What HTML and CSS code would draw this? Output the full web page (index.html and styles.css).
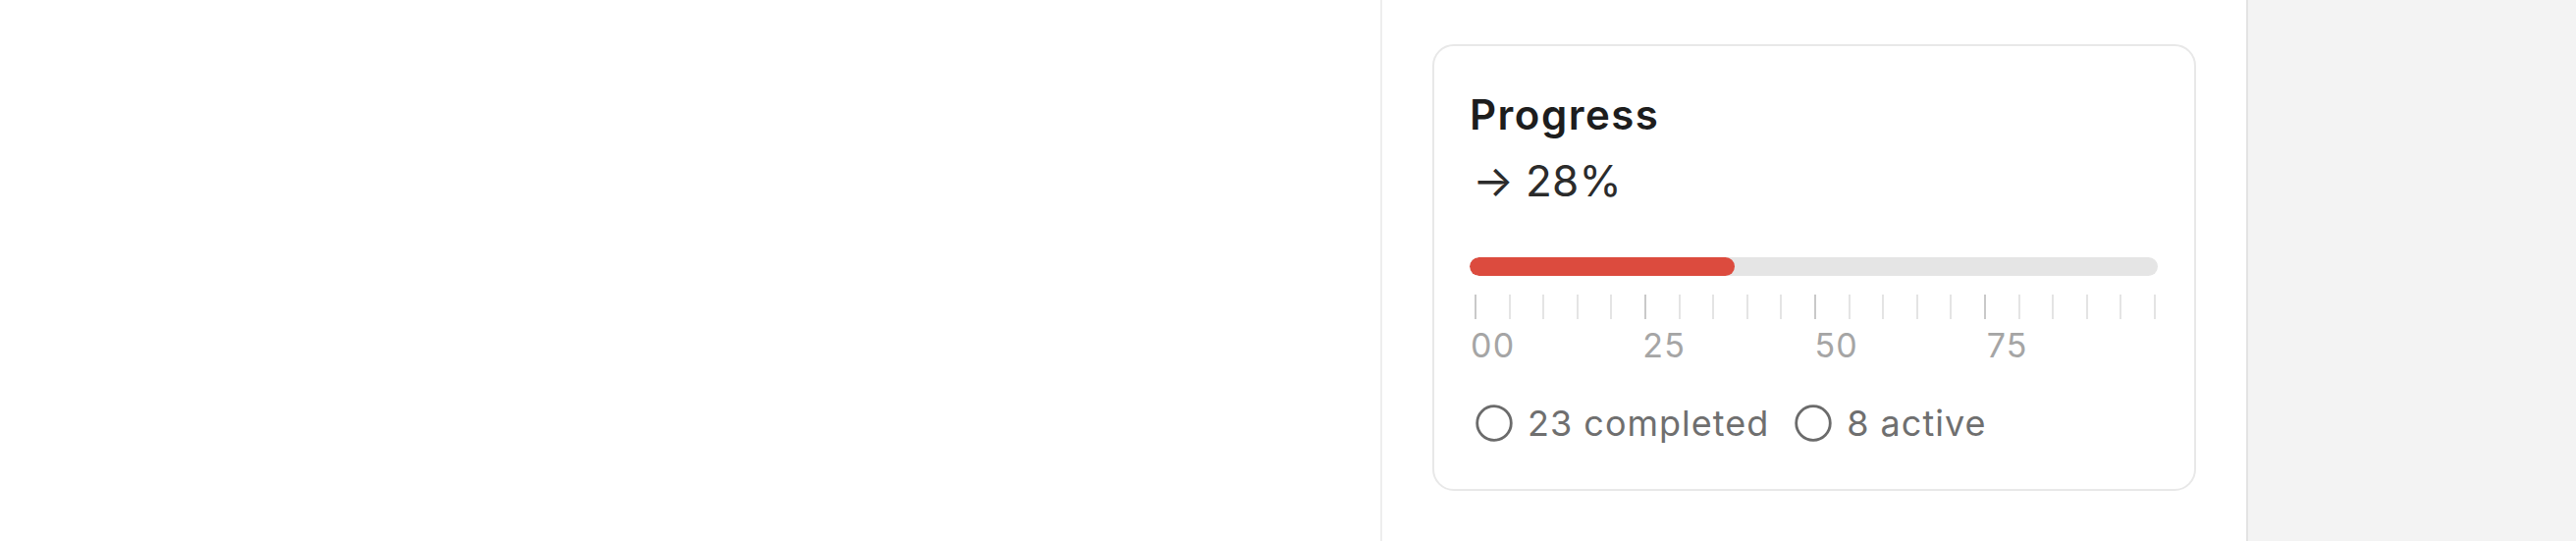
FILE: index.html
```html
<!DOCTYPE html>
<html lang="en">
<head>
<meta charset="utf-8">
<title>Progress</title>
<link rel="stylesheet" href="styles.css">
</head>
<body>
<div class="layout">
  <main class="main"></main>
  <aside class="panel">
    <section class="card">
      <h2 class="card-title">Progress</h2>
      <div class="card-value"><span class="arrow">→</span> 28%</div>
      <div class="bar"><div class="bar-fill" style="width: 38.5%"></div></div>
      <div class="ticks">
        <span class="tick major"></span><span class="tick"></span><span class="tick"></span><span class="tick"></span><span class="tick"></span>
        <span class="tick major"></span><span class="tick"></span><span class="tick"></span><span class="tick"></span><span class="tick"></span>
        <span class="tick major"></span><span class="tick"></span><span class="tick"></span><span class="tick"></span><span class="tick"></span>
        <span class="tick major"></span><span class="tick"></span><span class="tick"></span><span class="tick"></span><span class="tick"></span>
        <span class="tick"></span>
      </div>
      <div class="labels">
        <span>00</span><span>25</span><span>50</span><span>75</span>
      </div>
      <div class="stats">
        <div class="stat">
          <svg class="ring" viewBox="0 0 38 38" width="38" height="38"><circle cx="19" cy="19" r="17.3" fill="none" stroke="#6b6b6b" stroke-width="2.8"/></svg>
          <span>23 completed</span>
        </div>
        <div class="stat">
          <svg class="ring" viewBox="0 0 38 38" width="38" height="38"><circle cx="19" cy="19" r="17.3" fill="none" stroke="#6b6b6b" stroke-width="2.8"/></svg>
          <span>8 active</span>
        </div>
      </div>
    </section>
  </aside>
  <div class="side"></div>
</div>
</body>
</html>
```

FILE: styles.css
```css
* { box-sizing: border-box; }
html, body {
  margin: 0;
  padding: 0;
  height: 100%;
  background: #ffffff;
  font-family: "Inter", "Noto Sans", "Liberation Sans", sans-serif;
}
.layout {
  display: flex;
  height: 551px;
  overflow: hidden;
}
.main {
  flex: 1;
  background: #ffffff;
}
.panel {
  width: 882px;
  flex: none;
  border-left: 2px solid #eeeeee;
  padding: 45px 51px 0 51px;
  background: #ffffff;
}
.side {
  width: 336px;
  flex: none;
  background: #f3f3f3;
  border-left: 2px solid #e3e3e3;
}
.card {
  border: 2px solid #e8e8e8;
  border-radius: 22px;
  padding: 46px 36px 45px 36px;
  background: #ffffff;
}
.card-title {
  margin: 0;
  font-size: 42px;
  line-height: 48px;
  font-weight: 600;
  color: #1d1d1d;
  letter-spacing: 1.5px;
}
.card-value {
  margin-top: 17px;
  font-size: 44px;
  line-height: 52px;
  font-weight: 400;
  color: #2b2b2b;
  word-spacing: -1px;
  letter-spacing: 0.3px;
}
.arrow {
  margin-left: 3px;
}
.bar {
  margin-top: 52px;
  height: 19px;
  border-radius: 10px;
  background: #e5e5e5;
  overflow: hidden;
  margin-right: 1px;
}
.bar-fill {
  height: 100%;
  background: #dc4b3e;
  border-radius: 10px;
}
.ticks {
  margin-top: 19px;
  height: 25px;
  display: flex;
  justify-content: space-between;
  padding: 0 3px 0 5px;
}
.tick {
  width: 2px;
  height: 100%;
  background: #e4e4e4;
}
.tick.major {
  background: #c9c9c9;
}
.labels {
  margin-top: 7px;
  display: grid;
  grid-template-columns: repeat(4, 1fr);
  font-size: 34px;
  line-height: 40px;
  color: #a5a5a5;
  padding-left: 1px;
  letter-spacing: 1.2px;
}
.stats {
  margin-top: 37px;
  display: flex;
  gap: 26px;
  font-size: 36px;
  line-height: 44px;
  color: #6f6f6f;
  padding-left: 6px;
  letter-spacing: 1px;
}
.stat {
  display: flex;
  align-items: center;
  gap: 15px;
}
.ring {
  display: block;
  flex: none;
}
```
